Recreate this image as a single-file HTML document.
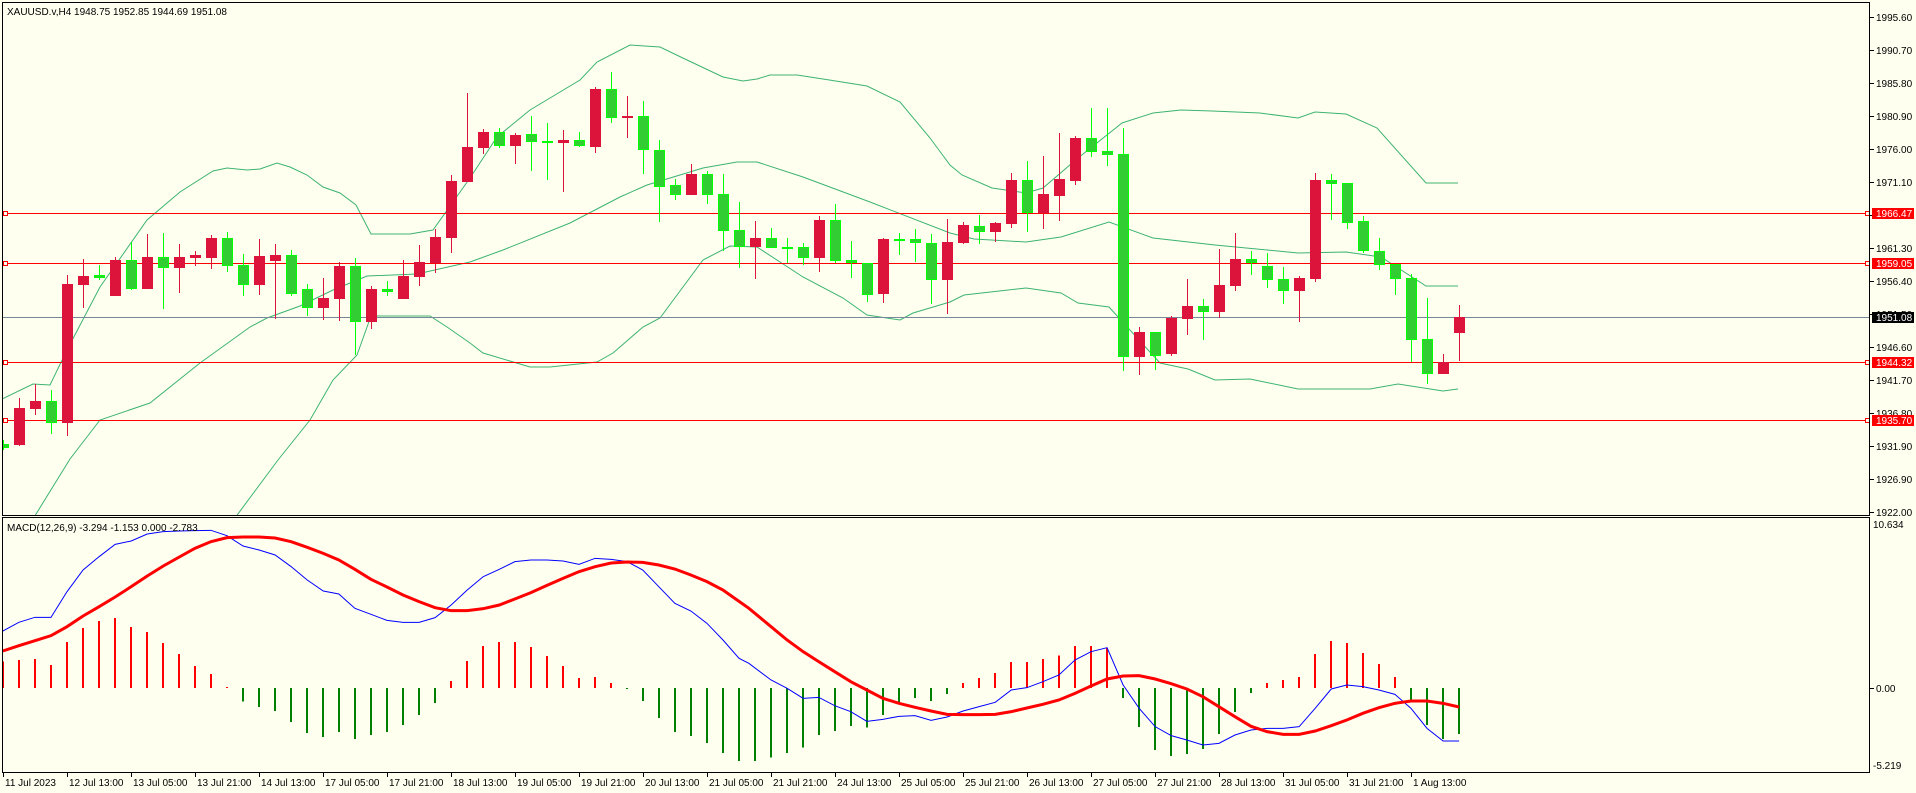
<!DOCTYPE html>
<html><head><meta charset="utf-8">
<style>
html,body{margin:0;padding:0;background:#fffff0;width:1916px;height:793px;overflow:hidden}
svg{display:block}
text{font-family:"Liberation Sans",sans-serif;font-size:10px;fill:#000}
</style></head>
<body>
<svg id="s" width="1916" height="793" viewBox="0 0 1916 793" xmlns="http://www.w3.org/2000/svg" shape-rendering="crispEdges">
<defs>
<clipPath id="cm"><rect x="3" y="3" width="1867" height="512"/></clipPath>
<clipPath id="cd"><rect x="3" y="518" width="1867" height="254"/></clipPath>
</defs>
<rect width="1916" height="793" fill="#fffff0"/>
<g id="main" clip-path="url(#cm)"></g>
<g id="macd" clip-path="url(#cd)"></g>
<rect x="2.5" y="2.5" width="1867" height="513" fill="none" stroke="#000"/>
<rect x="2.5" y="517.5" width="1867" height="255" fill="none" stroke="#000"/>
<g id="axis"></g>
<text x="7" y="15">XAUUSD.v,H4  1948.75 1952.85 1944.69 1951.08</text>
<text x="7" y="531">MACD(12,26,9) -3.294 -1.153 0.000 -2.783</text>
<g id="plabels">
<text x="1876" y="21">1995.60</text>
<text x="1876" y="54">1990.70</text>
<text x="1876" y="87">1985.80</text>
<text x="1876" y="120">1980.90</text>
<text x="1876" y="153">1976.00</text>
<text x="1876" y="186">1971.10</text>
<text x="1876" y="219">1966.20</text>
<text x="1876" y="252">1961.30</text>
<text x="1876" y="285">1956.40</text>
<text x="1876" y="318">1951.50</text>
<text x="1876" y="351">1946.60</text>
<text x="1876" y="384">1941.70</text>
<text x="1876" y="417">1936.80</text>
<text x="1876" y="450">1931.90</text>
<text x="1876" y="483">1926.90</text>
<text x="1876" y="516">1922.00</text>
<text x="1873" y="528">10.634</text>
<text x="1876" y="692">0.00</text>
<text x="1873" y="769">-5.219</text>
</g>
<g id="boxes"></g>
<g id="blabels">
<text x="1876" y="217" fill="#fff" style="fill:#fff">1966.47</text>
<text x="1876" y="267" fill="#fff" style="fill:#fff">1959.05</text>
<text x="1876" y="321" fill="#fff" style="fill:#fff">1951.08</text>
<text x="1876" y="366" fill="#fff" style="fill:#fff">1944.32</text>
<text x="1876" y="424" fill="#fff" style="fill:#fff">1935.70</text>
</g>
<g id="tlabels">
<text x="5" y="786">11 Jul 2023</text>
<text x="69" y="786">12 Jul 13:00</text>
<text x="133" y="786">13 Jul 05:00</text>
<text x="197" y="786">13 Jul 21:00</text>
<text x="261" y="786">14 Jul 13:00</text>
<text x="325" y="786">17 Jul 05:00</text>
<text x="389" y="786">17 Jul 21:00</text>
<text x="453" y="786">18 Jul 13:00</text>
<text x="517" y="786">19 Jul 05:00</text>
<text x="581" y="786">19 Jul 21:00</text>
<text x="645" y="786">20 Jul 13:00</text>
<text x="709" y="786">21 Jul 05:00</text>
<text x="773" y="786">21 Jul 21:00</text>
<text x="837" y="786">24 Jul 13:00</text>
<text x="901" y="786">25 Jul 05:00</text>
<text x="965" y="786">25 Jul 21:00</text>
<text x="1029" y="786">26 Jul 13:00</text>
<text x="1093" y="786">27 Jul 05:00</text>
<text x="1157" y="786">27 Jul 21:00</text>
<text x="1221" y="786">28 Jul 13:00</text>
<text x="1285" y="786">31 Jul 05:00</text>
<text x="1349" y="786">31 Jul 21:00</text>
<text x="1413" y="786">1 Aug 13:00</text>
</g>
</svg>
<script>
(function(){
var NS="http://www.w3.org/2000/svg";
function el(p,t,a){var e=document.createElementNS(NS,t);for(var k in a)e.setAttribute(k,a[k]);p.appendChild(e);return e;}
var main=document.getElementById('main'),macd=document.getElementById('macd'),axis=document.getElementById('axis'),boxes=document.getElementById('boxes');
function cx(k){return 3+16*k;}
// bands
function pl(g,pts,col,w){el(g,'polyline',{points:pts.map(function(p){return p[0]+','+p[1]}).join(' '),fill:'none',stroke:col,'stroke-width':w,'shape-rendering':'auto'});}
var bc='#3cb371';
pl(main,[[0,400],[33,384],[50,385],[67,350],[100,287],[147,220],[180,192],[213,171],[227,168],[247,170],[260,169],[277,163],[290,167],[307,175],[323,187],[340,193],[356,205],[371,234],[410,234],[433,230],[470,178],[497,137],[530,110],[580,80],[597,62],[630,45],[660,47],[687,60],[723,77],[743,81],[757,79],[770,75],[797,75],[823,79],[867,86],[900,102],[930,138],[950,165],[962,175],[992,188],[1026,193],[1043,188],[1078,158],[1122,123],[1153,113],[1181,110],[1212,111],[1260,113],[1298,118],[1315,112],[1346,114],[1377,128],[1426,183],[1458,183]],bc,1);
pl(main,[[20,540],[70,459],[100,420],[150,403],[200,363],[250,327],[267,318],[300,306],[333,290],[367,276],[417,274],[470,262],[503,250],[570,223],[620,197],[647,185],[703,168],[737,162],[757,162],[803,177],[870,202],[950,233],[974,239],[1026,242],[1061,237],[1109,222],[1153,238],[1215,245],[1298,253],[1346,252],[1381,257],[1426,286],[1458,286]],bc,1);
pl(main,[[226,530],[278,460],[310,420],[333,380],[357,355],[371,316],[430,316],[447,327],[470,343],[483,353],[530,367],[550,367],[597,362],[613,353],[643,327],[660,318],[703,260],[730,246],[757,247],[803,277],[843,298],[867,315],[900,320],[913,313],[950,302],[964,295],[1026,288],[1061,293],[1078,303],[1109,307],[1160,363],[1188,369],[1215,380],[1250,379],[1298,389],[1370,389],[1398,384],[1443,391],[1458,389]],bc,1);
// horizontal lines
var hl=[[213,'#ff0000','1966.47'],[263,'#ff0000','1959.05'],[362,'#ff0000','1944.32'],[420,'#ff0000','1935.70']];
el(main,'line',{x1:3,x2:1870,y1:317.5,y2:317.5,stroke:'#778899'});
hl.forEach(function(h){
 el(main,'line',{x1:3,x2:1870,y1:h[0]+.5,y2:h[0]+.5,stroke:h[1]});
 el(main,'rect',{x:3.5,y:h[0]-1.5,width:4,height:4,fill:'#fffff0',stroke:'#ff0000'});
 el(main,'rect',{x:1865.5,y:h[0]-1.5,width:4,height:4,fill:'#fffff0',stroke:'#ff0000'});
 el(boxes,'rect',{x:1872,y:h[0]-5,width:42,height:11,fill:'#ff0000'});
});
el(boxes,'rect',{x:1872,y:312,width:42,height:11,fill:'#000'});
// candles: real coords
var C=[
['g',444,448,440,450],['r',408,445,398,446],['r',401,409,384,415],['g',401,423,390,434],['r',284,423,275,436],
['r',276,285,259,308],['g',275,278,265,280],['r',260,296,257,296],['g',260,289,242,290],['r',257,289,234,289],
['g',257,268,233,309],['r',257,268,244,293],['r',255,258,251,266],['r',238,258,235,269],['g',238,266,232,272],
['g',265,285,254,296],['r',256,285,239,295],['r',255,261,244,319],['g',255,294,250,296],['g',289,308,284,316],
['r',298,308,278,320],['r',266,299,262,321],['g',266,322,258,355],['r',289,322,286,329],['g',289,292,281,296],
['r',276,299,260,299],['r',262,277,245,286],['r',237,263,229,273],['r',181,238,175,253],['r',147,182,93,182],
['r',132,148,129,154],['g',132,146,128,148],['r',135,146,133,164],['g',134,142,116,171],['g',141,143,123,180],
['r',140,143,130,192],['g',140,146,132,147],['r',89,147,87,153],['g',89,118,72,123],['r',116,118,96,138],
['g',116,150,101,174],['g',150,187,140,222],['g',185,195,179,200],['r',174,195,164,195],['g',174,195,171,204],
['g',194,231,174,251],['g',230,247,202,268],['r',238,247,221,279],['g',238,248,228,248],['g',247,248,238,263],
['g',247,258,243,265],['r',220,258,216,272],['g',220,261,204,263],['g',260,263,241,278],['g',263,295,263,302],
['r',239,294,238,303],['g',239,241,233,255],['g',239,243,229,262],['g',243,280,234,304]];
var Z=[['r',546,659,477,761],['r',495,548,486,551],['g',498,515,465,551],['r',489,515,486,545],['r',360,491,339,503],
['g',360,460,303,515],['r',402,460,288,506],['r',357,407,219,482],['r',234,362,228,374],['g',234,275,144,290],
['g',273,284,144,317],['g',282,890,204,932],['r',816,890,800,944],['g',816,887,816,929],['r',773,881,767,887],
['r',738,776,656,824],['g',738,755,716,839],['r',675,755,566,773],['r',597,677,518,692],['g',597,609,572,644],
['g',618,659,578,683],['g',656,692,620,731],['r',653,692,647,785],['r',360,656,339,665],['g',360,371,342,479],
['g',369,488,369,506],['g',483,572,467,578],['g',573,614,533,630],['g',611,656,611,704],['g',653,839,641,905],
['g',836,941,713,971],['r',907,941,881,941],['r',770,818,734,902]];
Z.forEach(function(z){C.push([z[0],Math.round(60+z[1]/3),Math.round(60+z[2]/3),Math.round(60+z[3]/3),Math.round(60+z[4]/3)]);});
C.forEach(function(c,k){
 var x=cx(k),red=c[0]=='r';
 var wc=red?'#dc143c':'#00ff00';
 el(main,'rect',{x:x,y:c[3],width:1,height:Math.max(1,c[4]-c[3]),fill:wc});
 var h=Math.max(2,c[2]-c[1]);
 if(red) el(main,'rect',{x:x-5,y:c[1],width:11,height:h,fill:'#dc143c'});
 else{el(main,'rect',{x:x-5,y:c[1],width:11,height:h,fill:'#00ff00'});if(h>2)el(main,'rect',{x:x-4,y:c[1]+1,width:9,height:h-2,fill:'#32cd32'});}
});
// macd histogram
var H=[440,435,432,450,381,339,318,309,336,351,384,417,453,477,516,560,576,588,621,654,666,651,672,660,651,630,600,564,498,438,393,381,381,396,423,453,489,486,504,522,558,609,651,663,684,714,
738,738,728,714,698,660,648,633,638,600,567,549,558,537,504,489,474,441,441,432,422,393,393,399,549,636,705,723,717,702,657,591,534,504,495,486,417,378,384,414,447,486,558,630,672,657];
H.forEach(function(v,k){
 var y=515+v/3,z=688,x=cx(k);
 var t=Math.min(y,z),hh=Math.max(1,Math.abs(y-z));
 el(macd,'rect',{x:x-1,y:t,width:2,height:hh,fill:(y<z?'#ff0000':'#008000')});
});
function cv(a,off){return a.map(function(p){return [off+p[0]/2.119,515+p[1]/3];});}
var B1=[[6,348],[40,322],[74,307],[108,307],[142,230],[176,165],[210,125],[244,88],[278,78],[312,57],[346,50],[380,48],[413,47],[447,46],[481,62],[515,93],[549,105],[583,120],[617,155],[651,195],[685,228],[718,237],[752,280],[786,298],[820,316],[854,322],[888,322],[922,308],[956,270],[990,225],[1024,185],[1058,163],[1091,140],[1125,135],[1159,135],[1193,138],[1227,148],[1261,130],[1295,133],[1329,140],[1362,165],[1396,215],[1430,265],[1464,288],[1498,325],[1532,375],[1566,430]];
var B2=[[40,445],[87,495],[121,520],[155,550],[188,547],[222,572],[256,590],[290,619],[324,613],[358,604],[392,602],[426,616],[460,606],[494,588],[528,575],[562,562],[596,525],[629,518],[663,500],[697,480],[731,435],[765,410],[799,398],[833,510],[867,580],[901,635],[935,662],[968,675],[1002,690],[1036,685],[1070,660],[1104,645],[1138,640],[1172,640],[1206,635],[1240,580],[1274,522],[1307,510],[1341,515],[1375,525],[1409,538],[1443,580],[1477,640],[1511,678],[1545,678]];
var R1=[[6,408],[40,392],[74,377],[108,362],[142,335],[176,303],[210,275],[244,246],[278,215],[312,183],[346,153],[380,126],[413,100],[447,80],[481,68],[515,66],[549,66],[583,69],[617,80],[651,97],[685,115],[718,135],[752,163],[786,193],[820,216],[854,240],[888,260],[922,278],[956,287],[990,287],[1024,281],[1058,270],[1091,252],[1125,233],[1159,211],[1193,190],[1227,170],[1261,155],[1295,144],[1329,141],[1362,142],[1396,150],[1430,162],[1464,180],[1498,200],[1532,225]];
var R2=[[0,240],[40,280],[87,335],[121,375],[155,410],[188,440],[222,470],[256,500],[290,525],[324,550],[358,565],[392,577],[426,588],[460,598],[494,599],[528,599],[562,598],[596,590],[629,579],[663,568],[697,555],[731,535],[765,513],[799,492],[833,483],[867,482],[901,492],[935,506],[968,522],[1002,545],[1036,575],[1070,605],[1104,634],[1138,650],[1172,658],[1206,658],[1240,648],[1274,632],[1307,615],[1341,595],[1375,578],[1409,565],[1443,558],[1477,558],[1511,565],[1545,576]];
pl(macd,cv(B1,0).concat(cv(B2,730)),'#0000ff',1);
pl(macd,cv(R1,0).concat(cv(R2,730)),'#ff0000',3);
// price axis ticks
for(var i=0;i<16;i++){var y=Math.round(17+i*33);el(axis,'rect',{x:1870,y:y,width:4,height:1,fill:'#000'});}
el(axis,'rect',{x:1870,y:688,width:4,height:1,fill:'#000'});
for(var j=0;j<23;j++){el(axis,'rect',{x:3+64*j,y:773,width:1,height:4,fill:'#000'});}
})();
</script>
</body></html>
